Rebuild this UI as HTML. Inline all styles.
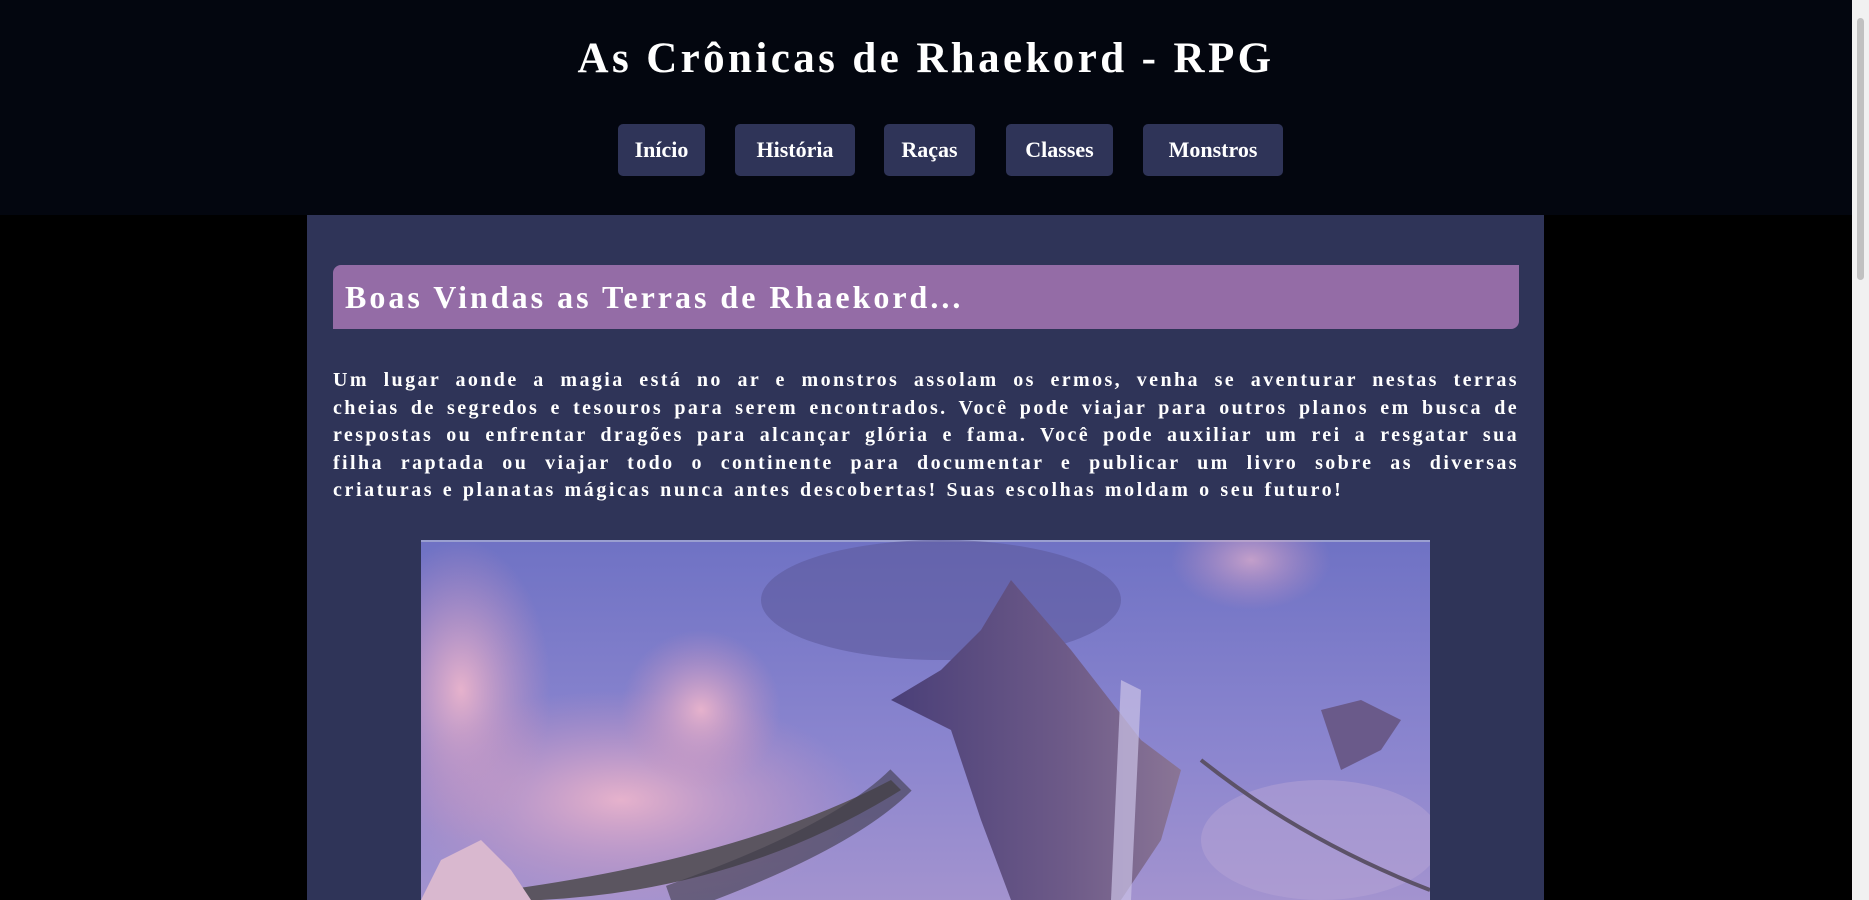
<!DOCTYPE html>
<html><head><meta charset="utf-8"><style>
html,body{margin:0;padding:0;}
body{width:1869px;height:900px;overflow:hidden;background:#000;font-family:"Liberation Serif",serif;position:relative;}
header{position:absolute;left:0;top:0;width:1852px;height:215px;background:#03060f;}
h1{position:absolute;left:0;width:1852px;top:34px;margin:0;text-align:center;color:#fff;font-size:43px;font-weight:bold;letter-spacing:3.4px;}
.nav a{position:absolute;top:124px;height:52px;line-height:52px;background:#2f3458;color:#fff;border-radius:5px;text-align:center;font-size:22px;font-weight:bold;text-decoration:none;}
main{position:absolute;left:307px;top:215px;width:1237px;height:685px;background:#2f3458;}
.h2{position:absolute;left:26px;top:50px;width:1186px;height:64px;background:#946ca6;border-radius:8px 0 8px 0;color:#fff;font-size:32px;font-weight:bold;line-height:64px;box-sizing:border-box;padding-left:12px;letter-spacing:3px;}
.p{position:absolute;left:26px;top:152px;width:1186px;margin:0;color:#fff;font-size:20px;font-weight:bold;line-height:27.5px;letter-spacing:2.4px;}
.p div{text-align:justify;text-align-last:justify;white-space:nowrap;}
.p div.l{text-align-last:left;letter-spacing:2.6px;word-spacing:1px;}
.img{position:absolute;left:114px;top:325px;width:1009px;height:360px;overflow:hidden;}
.sb{position:absolute;right:0;top:0;width:17px;height:900px;background:#f1f1f1;}
.sb div{position:absolute;left:5px;top:18px;width:7px;height:262px;background:#c1c1c1;border-radius:4px;}
</style></head><body>
<header>
<h1>As Crônicas de Rhaekord - RPG</h1>
<div class="nav">
<a style="left:618px;width:87px">Início</a>
<a style="left:735px;width:120px">História</a>
<a style="left:884px;width:91px">Raças</a>
<a style="left:1006px;width:107px">Classes</a>
<a style="left:1143px;width:140px">Monstros</a>
</div>
</header>
<main>
<div class="h2">Boas Vindas as Terras de Rhaekord...</div>
<div class="p">
<div>Um lugar aonde a magia está no ar e monstros assolam os ermos, venha se aventurar nestas terras</div>
<div>cheias de segredos e tesouros para serem encontrados. Você pode viajar para outros planos em busca de</div>
<div>respostas ou enfrentar dragões para alcançar glória e fama. Você pode auxiliar um rei a resgatar sua</div>
<div>filha raptada ou viajar todo o continente para documentar e publicar um livro sobre as diversas</div>
<div class="l">criaturas e planatas mágicas nunca antes descobertas! Suas escolhas moldam o seu futuro!</div>
</div>
<div class="img">
<svg width="1009" height="360" viewBox="0 0 1009 360">
<defs>
<linearGradient id="sky" x1="0" y1="0" x2="0" y2="1"><stop offset="0" stop-color="#6f72c4"/><stop offset="0.6" stop-color="#8c86cf"/><stop offset="1" stop-color="#a393cf"/></linearGradient>
<radialGradient id="pk" cx="0.5" cy="0.5" r="0.5"><stop offset="0" stop-color="#e6b2cc"/><stop offset="1" stop-color="#c892bd" stop-opacity="0"/></radialGradient>
<linearGradient id="isl" x1="0" y1="0" x2="1" y2="0"><stop offset="0" stop-color="#4a3f78"/><stop offset="0.6" stop-color="#6d5a88"/><stop offset="1" stop-color="#8a7596"/></linearGradient>
</defs>
<rect width="1009" height="360" fill="url(#sky)"/>
<rect width="1009" height="2" fill="#9a9fd0"/>
<ellipse cx="40" cy="150" rx="90" ry="150" fill="url(#pk)"/>
<ellipse cx="200" cy="260" rx="240" ry="110" fill="url(#pk)"/>
<ellipse cx="280" cy="170" rx="80" ry="80" fill="url(#pk)"/>
<ellipse cx="830" cy="20" rx="80" ry="50" fill="url(#pk)" opacity="0.7"/>
<ellipse cx="520" cy="60" rx="180" ry="60" fill="#5d5a9c" opacity="0.6"/>
<ellipse cx="900" cy="300" rx="120" ry="60" fill="#b6a3d6" opacity="0.5"/>
<path d="M590 40 L650 110 L720 200 L760 230 L740 300 L700 360 L590 360 L560 280 L530 190 L470 160 L520 130 L560 90 Z" fill="url(#isl)"/>
<path d="M960 210 L980 180 L940 160 L900 170 L920 230 Z" fill="#6a5a8a"/>
<path d="M700 140 L720 150 L710 360 L690 360 Z" fill="#cbc2e6" opacity="0.7"/>
<path d="M0 360 Q300 330 470 240 L480 250 Q320 350 120 360 Z" fill="#5b5560"/>
<path d="M250 360 Q420 300 480 240" stroke="#3e3b48" stroke-width="30" fill="none" opacity="0.6"/>
<path d="M780 220 Q880 300 1009 350" stroke="#5c5268" stroke-width="4" fill="none"/>
<path d="M0 360 L20 320 L60 300 L90 330 L110 360 Z" fill="#d9b8cf"/>
</svg>
</div>
</main>
<div class="sb"><div></div></div>
</body></html>
